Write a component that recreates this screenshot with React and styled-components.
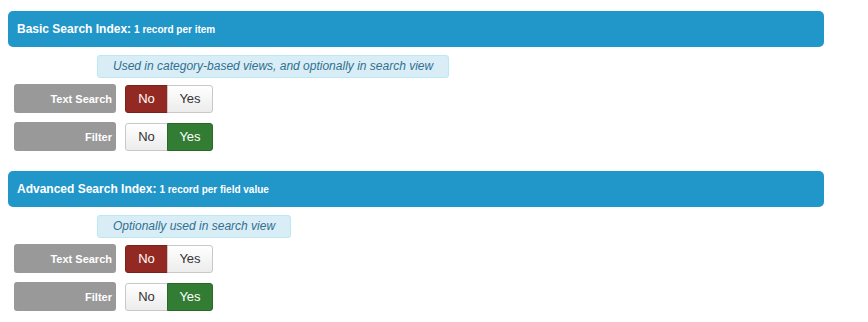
import styled, { createGlobalStyle } from "styled-components"

const GlobalStyle = createGlobalStyle`
  body {
    margin: 0;
    background: #fff;
    font-family: "Liberation Sans", Arial, sans-serif;
  }
`

const sections = [
  {
    title: "Basic Search Index:",
    sub: "1 record per item",
    note: "Used in category-based views, and optionally in search view",
    rows: [
      { label: "Text Search", value: "no" },
      { label: "Filter", value: "yes" },
    ],
  },
  {
    title: "Advanced Search Index:",
    sub: "1 record per field value",
    note: "Optionally used in search view",
    rows: [
      { label: "Text Search", value: "no" },
      { label: "Filter", value: "yes" },
    ],
  },
]

const App = () => {
  return (
    <Page>
      <GlobalStyle />
      {sections.map(({ title, sub, note, rows }) => (
        <Section key={title}>
          <Header>
            {title} <small>{sub}</small>
          </Header>
          <Note>{note}</Note>
          <Rows>
            {rows.map(({ label, value }) => (
              <Row key={label}>
                <Label>{label}</Label>
                <Toggle>
                  <ToggleBtn $active={value === "no"} $tone="no">No</ToggleBtn>
                  <ToggleBtn $active={value === "yes"} $tone="yes">Yes</ToggleBtn>
                </Toggle>
              </Row>
            ))}
          </Rows>
        </Section>
      ))}
    </Page>
  )
}

export default App

const Page = styled.div`
  padding: 11px 0 0 8px;
  width: 816px;
  display: flex;
  flex-direction: column;
  gap: 20px;
`

const Section = styled.section`
  display: flex;
  flex-direction: column;
`

const Header = styled.div`
  background: #2196c9;
  color: #fff;
  border-radius: 5px;
  height: 36px;
  display: flex;
  align-items: center;
  gap: 3px;
  padding-left: 9px;
  font-size: 12px;
  font-weight: 700;

  small {
    font-size: 10px;
    font-weight: 700;
    margin-top: 1px;
  }
`

const Note = styled.div`
  align-self: flex-start;
  margin: 8px 0 0 89px;
  padding: 3px 15px;
  background: #d9edf7;
  border: 1px solid #bce8f1;
  border-radius: 3px;
  color: #31708f;
  font-style: italic;
  font-size: 12px;
  line-height: 15px;
`

const Rows = styled.div`
  display: flex;
  flex-direction: column;
  gap: 9px;
  margin: 6px 0 0 6px;
`

const Row = styled.div`
  display: flex;
  align-items: center;
  gap: 9px;
`

const Label = styled.div`
  width: 102px;
  height: 29px;
  box-sizing: border-box;
  background: #999;
  border-radius: 3px;
  color: #fff;
  font-size: 11px;
  font-weight: 700;
  display: flex;
  align-items: center;
  justify-content: flex-end;
  padding-right: 4px;
`

const Toggle = styled.div`
  display: flex;
  height: 28px;
`

const ToggleBtn = styled.div`
  box-sizing: border-box;
  width: ${p => (p.$tone === "no" ? "43px" : "46px")};
  display: flex;
  align-items: center;
  justify-content: center;
  font-size: 13px;
  border: 1px solid ${p => (p.$active ? (p.$tone === "no" ? "#7a221c" : "#28692a") : "#c8c8c8")};
  background: ${p =>
    p.$active
      ? p.$tone === "no"
        ? "#922a23"
        : "#327c34"
      : "linear-gradient(#fff, #ececec)"};
  color: ${p => (p.$active ? "#fff" : "#333")};
  border-radius: ${p => (p.$tone === "no" ? "3px 0 0 3px" : "0 3px 3px 0")};
  ${p => p.$tone === "yes" && "margin-left: -1px;"}
`
